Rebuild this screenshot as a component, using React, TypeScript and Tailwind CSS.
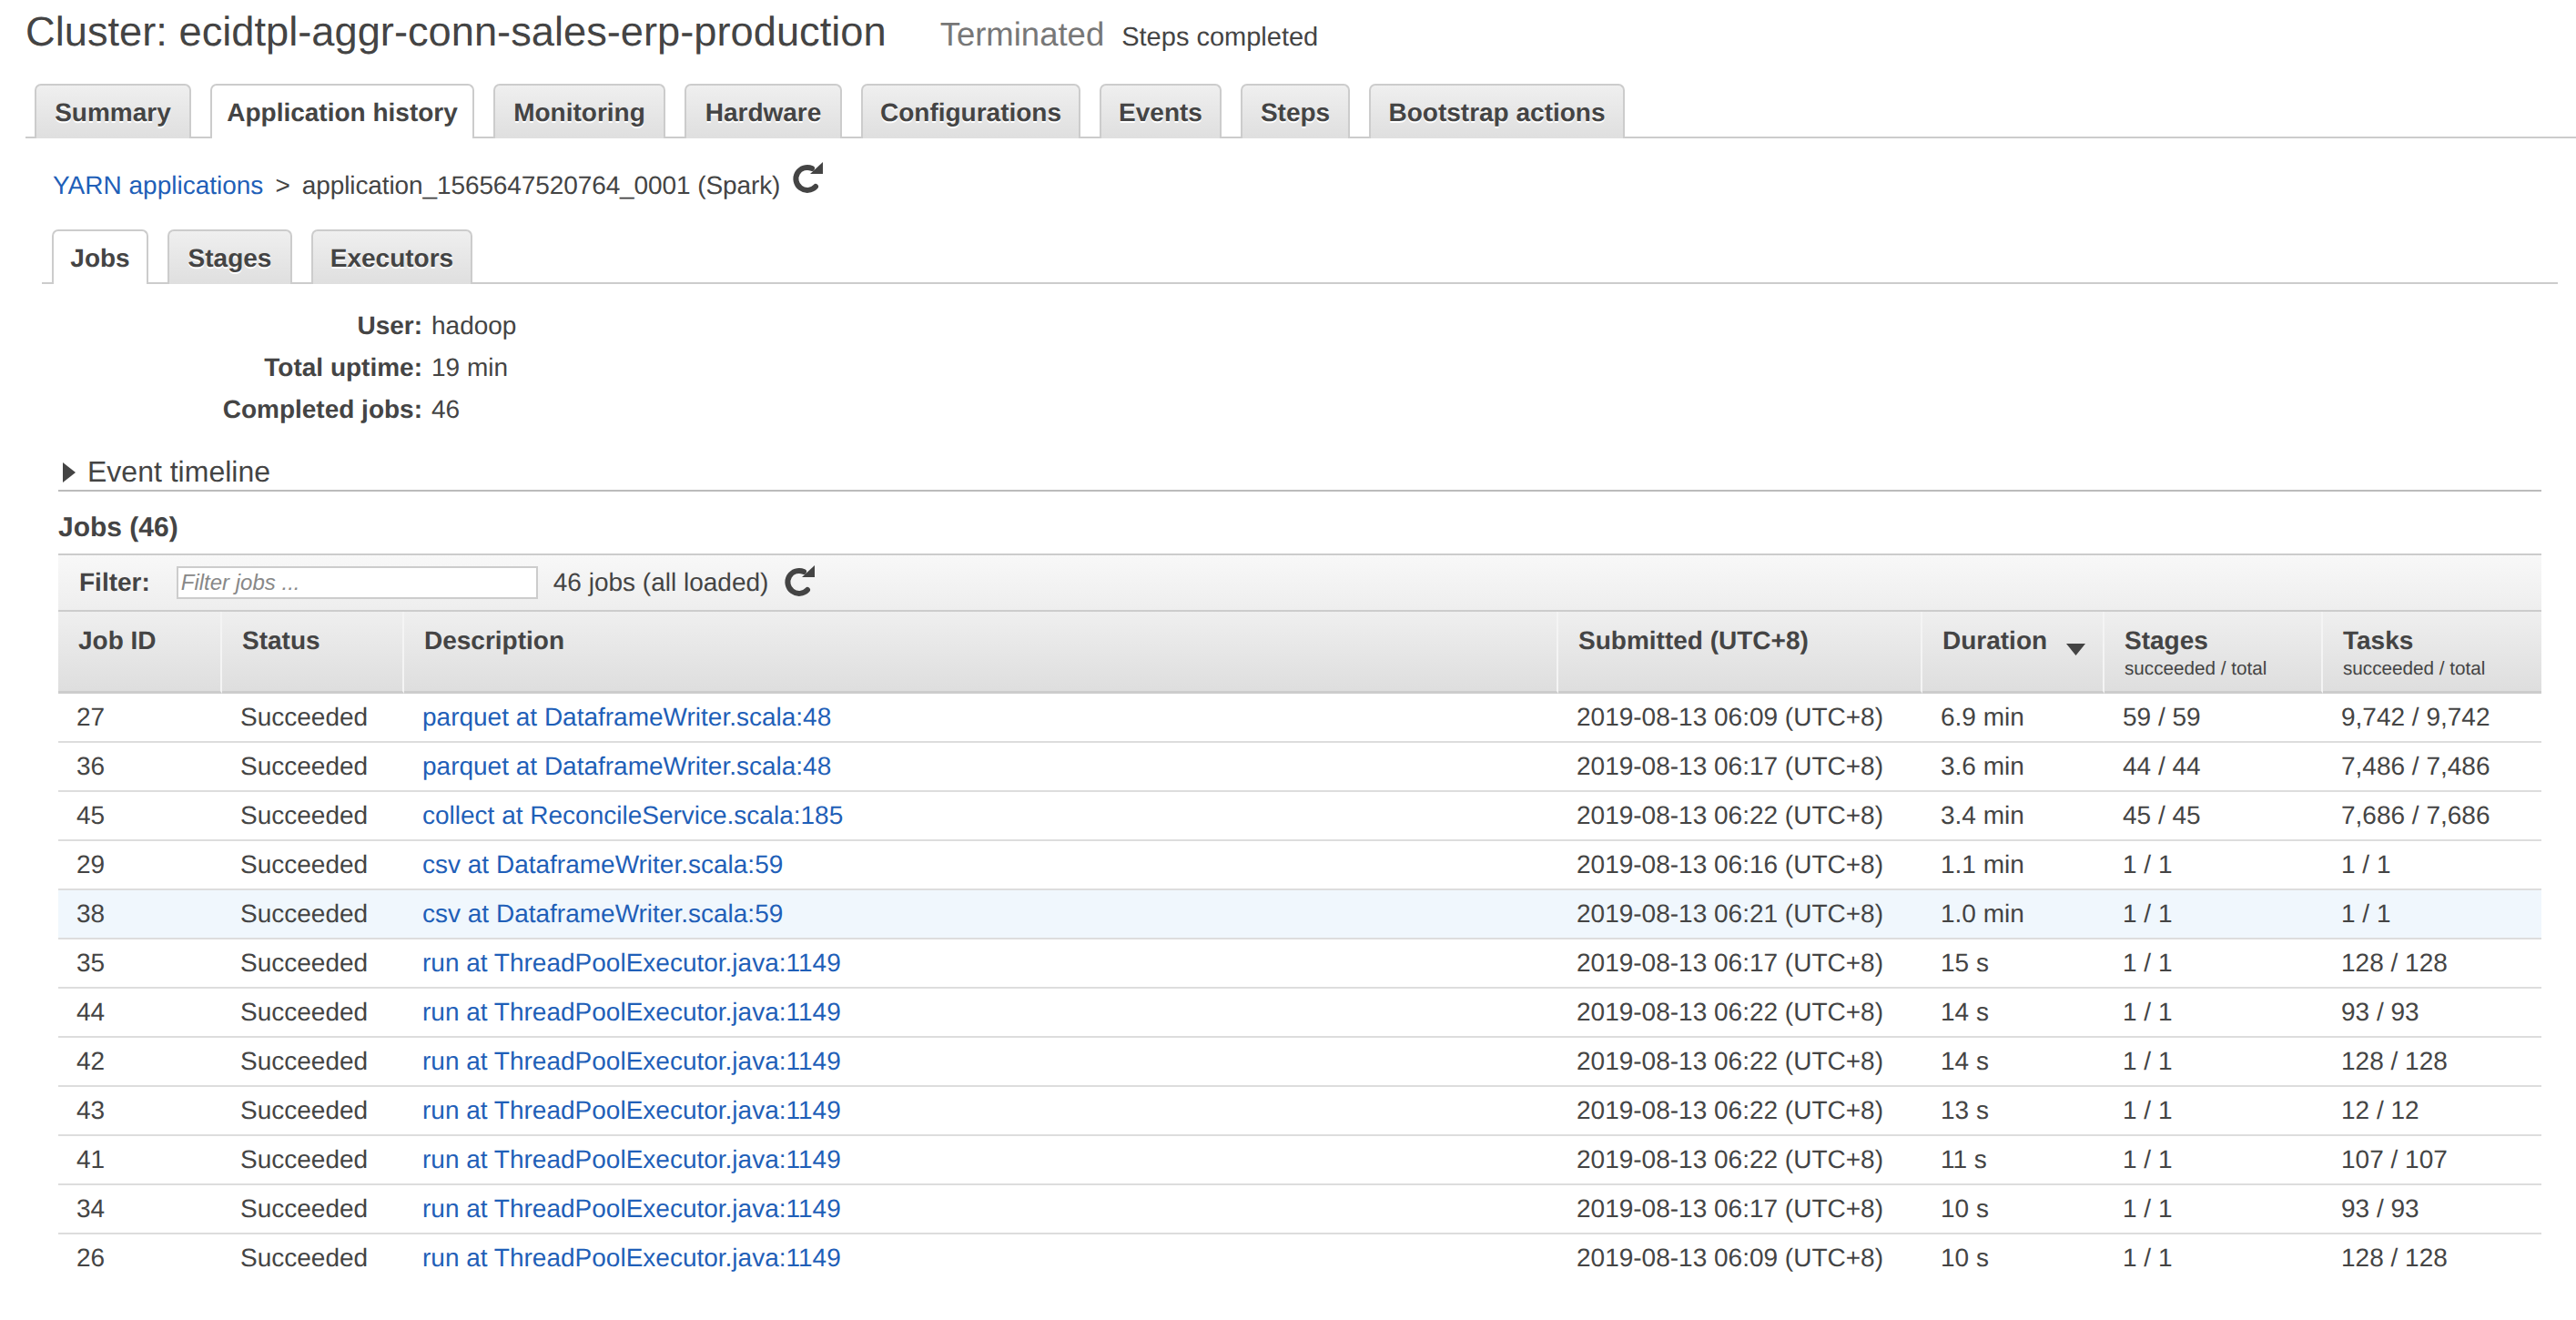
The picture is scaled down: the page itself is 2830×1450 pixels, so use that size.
import React from 'react';

const clusterTabs = [
  { label: 'Summary', width: 'w-[172px]' },
  { label: 'Application history', width: 'w-[290px]' },
  { label: 'Monitoring', width: 'w-[189px]' },
  { label: 'Hardware', width: 'w-[173px]' },
  { label: 'Configurations', width: 'w-[241px]' },
  { label: 'Events', width: 'w-[134px]' },
  { label: 'Steps', width: 'w-[120px]' },
  { label: 'Bootstrap actions', width: 'w-[281px]' },
];
const appTabs = [
  { label: 'Jobs', width: 'w-[106px]' },
  { label: 'Stages', width: 'w-[137px]' },
  { label: 'Executors', width: 'w-[177px]' },
];

const jobs = [
  ['27', 'parquet at DataframeWriter.scala:48', '2019-08-13 06:09 (UTC+8)', '6.9 min', '59 / 59', '9,742 / 9,742'],
  ['36', 'parquet at DataframeWriter.scala:48', '2019-08-13 06:17 (UTC+8)', '3.6 min', '44 / 44', '7,486 / 7,486'],
  ['45', 'collect at ReconcileService.scala:185', '2019-08-13 06:22 (UTC+8)', '3.4 min', '45 / 45', '7,686 / 7,686'],
  ['29', 'csv at DataframeWriter.scala:59', '2019-08-13 06:16 (UTC+8)', '1.1 min', '1 / 1', '1 / 1'],
  ['38', 'csv at DataframeWriter.scala:59', '2019-08-13 06:21 (UTC+8)', '1.0 min', '1 / 1', '1 / 1'],
  ['35', 'run at ThreadPoolExecutor.java:1149', '2019-08-13 06:17 (UTC+8)', '15 s', '1 / 1', '128 / 128'],
  ['44', 'run at ThreadPoolExecutor.java:1149', '2019-08-13 06:22 (UTC+8)', '14 s', '1 / 1', '93 / 93'],
  ['42', 'run at ThreadPoolExecutor.java:1149', '2019-08-13 06:22 (UTC+8)', '14 s', '1 / 1', '128 / 128'],
  ['43', 'run at ThreadPoolExecutor.java:1149', '2019-08-13 06:22 (UTC+8)', '13 s', '1 / 1', '12 / 12'],
  ['41', 'run at ThreadPoolExecutor.java:1149', '2019-08-13 06:22 (UTC+8)', '11 s', '1 / 1', '107 / 107'],
  ['34', 'run at ThreadPoolExecutor.java:1149', '2019-08-13 06:17 (UTC+8)', '10 s', '1 / 1', '93 / 93'],
  ['26', 'run at ThreadPoolExecutor.java:1149', '2019-08-13 06:09 (UTC+8)', '10 s', '1 / 1', '128 / 128'],
];

function ReloadIcon({ className }: { className?: string }) {
  return (
    <svg viewBox="0 0 36 36" className={className}>
      <path d="M27 28 A12.5 12.5 0 1 1 23 8" fill="none" stroke="#444" strokeWidth="6" strokeLinecap="round" />
      <path d="M21 14 H35 V1 Z" fill="#444" />
    </svg>
  );
}

function Tab({ label, width, active }: { label: string; width: string; active?: boolean }) {
  const base =
    'h-[60px] -mb-[2px] pt-[2px] flex items-center justify-center border-2 border-b-0 border-[#ccc] rounded-t-[7px] text-[28px] font-bold text-[#444] ';
  return (
    <div
      className={
        base +
        width +
        (active ? ' bg-white' : ' bg-gradient-to-b from-[#efefef] to-[#dfdfdf] [text-shadow:0_2px_0_#fff]')
      }
    >
      {label}
    </div>
  );
}

function HeaderCell({ title, sub, last }: { title: string; sub?: string; last?: boolean }) {
  return (
    <th
      className={
        last
          ? 'h-[90px] pl-[22px] pt-[15px] align-top text-left border-b-[3px] border-[#ccc] bg-gradient-to-b from-[#efefef] to-[#dedede] font-bold'
          : 'h-[90px] pl-[22px] pt-[15px] align-top text-left border-b-[3px] border-b-[#ccc] border-r-2 border-r-[#f4f4f4] bg-gradient-to-b from-[#efefef] to-[#dedede] font-bold'
      }
    >
      <div className="h-[33px] leading-[33px]">{title}</div>
      {sub && <div className="mt-[3px] text-[20.7px] leading-[24px] font-normal">{sub}</div>}
    </th>
  );
}

export default function App() {
  return (
    <div className="w-[2830px] h-[1450px] overflow-hidden bg-white text-[#444] text-[28px] [text-rendering:geometricPrecision] font-['Liberation_Sans',Arial,sans-serif]">
      <div className="h-[92px] pl-[28px] pt-[9px] flex items-baseline">
        <h1 className="text-[45.25px] leading-[52px] font-normal">Cluster: ecidtpl-aggr-conn-sales-erp-production</h1>
        <span className="ml-[59px] text-[36.5px] text-[#777]">Terminated</span>
        <span className="ml-[19px] text-[29px]">Steps completed</span>
      </div>

      <div className="ml-[28px] pl-[10px] flex gap-[21px] border-b-2 border-[#ccc]">
        {clusterTabs.map((t) => (
          <Tab key={t.label} label={t.label} width={t.width} active={t.label === 'Application history'} />
        ))}
      </div>

      <div className="h-[100px] pl-[58px] pt-[35px] flex items-start">
        <a className="text-[#1f5fb8] leading-[34px]">YARN applications</a>
        <span className="ml-[13px] leading-[34px]">&gt;</span>
        <span className="ml-[13px] leading-[34px] tracking-[-0.1px]">application_1565647520764_0001 (Spark)</span>
        <ReloadIcon className="ml-[12px] -mt-[10px] w-[36px] h-[36px]" />
      </div>

      <div className="ml-[46px] mr-[20px] pl-[11px] flex gap-[21px] border-b-2 border-[#ccc]">
        {appTabs.map((t) => (
          <Tab key={t.label} label={t.label} width={t.width} active={t.label === 'Jobs'} />
        ))}
      </div>

      <div className="mt-[23px] grid grid-cols-[464px_1fr] gap-x-[10px] auto-rows-[46px] items-center">
        <div className="text-right font-bold">User:</div>
        <div>hadoop</div>
        <div className="text-right font-bold">Total uptime:</div>
        <div>19 min</div>
        <div className="text-right font-bold">Completed jobs:</div>
        <div>46</div>
      </div>

      <div className="ml-[64px] w-[2728px] h-[67px] pt-[26px] border-b-2 border-[#bbb] flex items-start">
        <svg viewBox="0 0 14 22" className="ml-[5px] mt-[9px] w-[14px] h-[22px]">
          <path d="M0 0 L14 11 L0 22 Z" fill="#444" />
        </svg>
        <span className="ml-[13px] text-[32px] leading-[38px]">Event timeline</span>
      </div>

      <div className="ml-[64px] w-[2728px]">
        <div className="h-[68px] pt-[24px] text-[30px] font-bold leading-[32px]">Jobs (46)</div>

        <div className="h-[64px] pl-[23px] flex items-center border-y-2 border-[#ccc] bg-gradient-to-b from-[#f8f8f8] to-[#eeeeee]">
          <span className="font-bold">Filter:</span>
          <input
            placeholder="Filter jobs ..."
            className="ml-[29px] w-[397px] h-[36px] px-[3px] border-2 border-[#ccc] bg-white text-[24px] placeholder:italic placeholder:text-[#888]"
          />
          <span className="ml-[17px]">46 jobs (all loaded)</span>
          <ReloadIcon className="ml-[16px] -mt-[4px] w-[36px] h-[36px]" />
        </div>

        <table className="w-[2728px] table-fixed border-separate border-spacing-0">
          <colgroup>
            <col className="w-[180px]" />
            <col className="w-[200px]" />
            <col className="w-[1268px]" />
            <col className="w-[400px]" />
            <col className="w-[200px]" />
            <col className="w-[240px]" />
            <col className="w-[240px]" />
          </colgroup>
          <thead>
            <tr>
              <HeaderCell title="Job ID" />
              <HeaderCell title="Status" />
              <HeaderCell title="Description" />
              <HeaderCell title="Submitted (UTC+8)" />
              <th className="h-[90px] pl-[22px] pt-[15px] align-top text-left border-b-[3px] border-b-[#ccc] border-r-2 border-r-[#f4f4f4] bg-gradient-to-b from-[#efefef] to-[#dedede] font-bold">
                <div className="h-[33px] leading-[33px] flex">
                  Duration
                  <svg viewBox="0 0 21 13" className="ml-[21px] mt-[20px] w-[21px] h-[13px]">
                    <path d="M0 0 H21 L10.5 13 Z" fill="#444" />
                  </svg>
                </div>
              </th>
              <HeaderCell title="Stages" sub="succeeded / total" />
              <HeaderCell title="Tasks" sub="succeeded / total" last />
            </tr>
          </thead>
          <tbody>
            {jobs.map((job, i) => {
              const rowClass = i === 4 ? 'bg-[#f0f7fd]' : 'bg-white';
              const cell =
                i === jobs.length - 1
                  ? 'h-[54px] pl-[20px] align-middle border-b-2 border-transparent'
                  : 'h-[54px] pl-[20px] align-middle border-b-2 border-[#ddd]';
              return (
                <tr key={i} className={rowClass}>
                  <td className={cell}>{job[0]}</td>
                  <td className={cell}>Succeeded</td>
                  <td className={cell}>
                    <a className="text-[#1f5fb8]">{job[1]}</a>
                  </td>
                  <td className={cell}>{job[2]}</td>
                  <td className={cell}>{job[3]}</td>
                  <td className={cell}>{job[4]}</td>
                  <td className={cell}>{job[5]}</td>
                </tr>
              );
            })}
          </tbody>
        </table>
      </div>
    </div>
  );
}
